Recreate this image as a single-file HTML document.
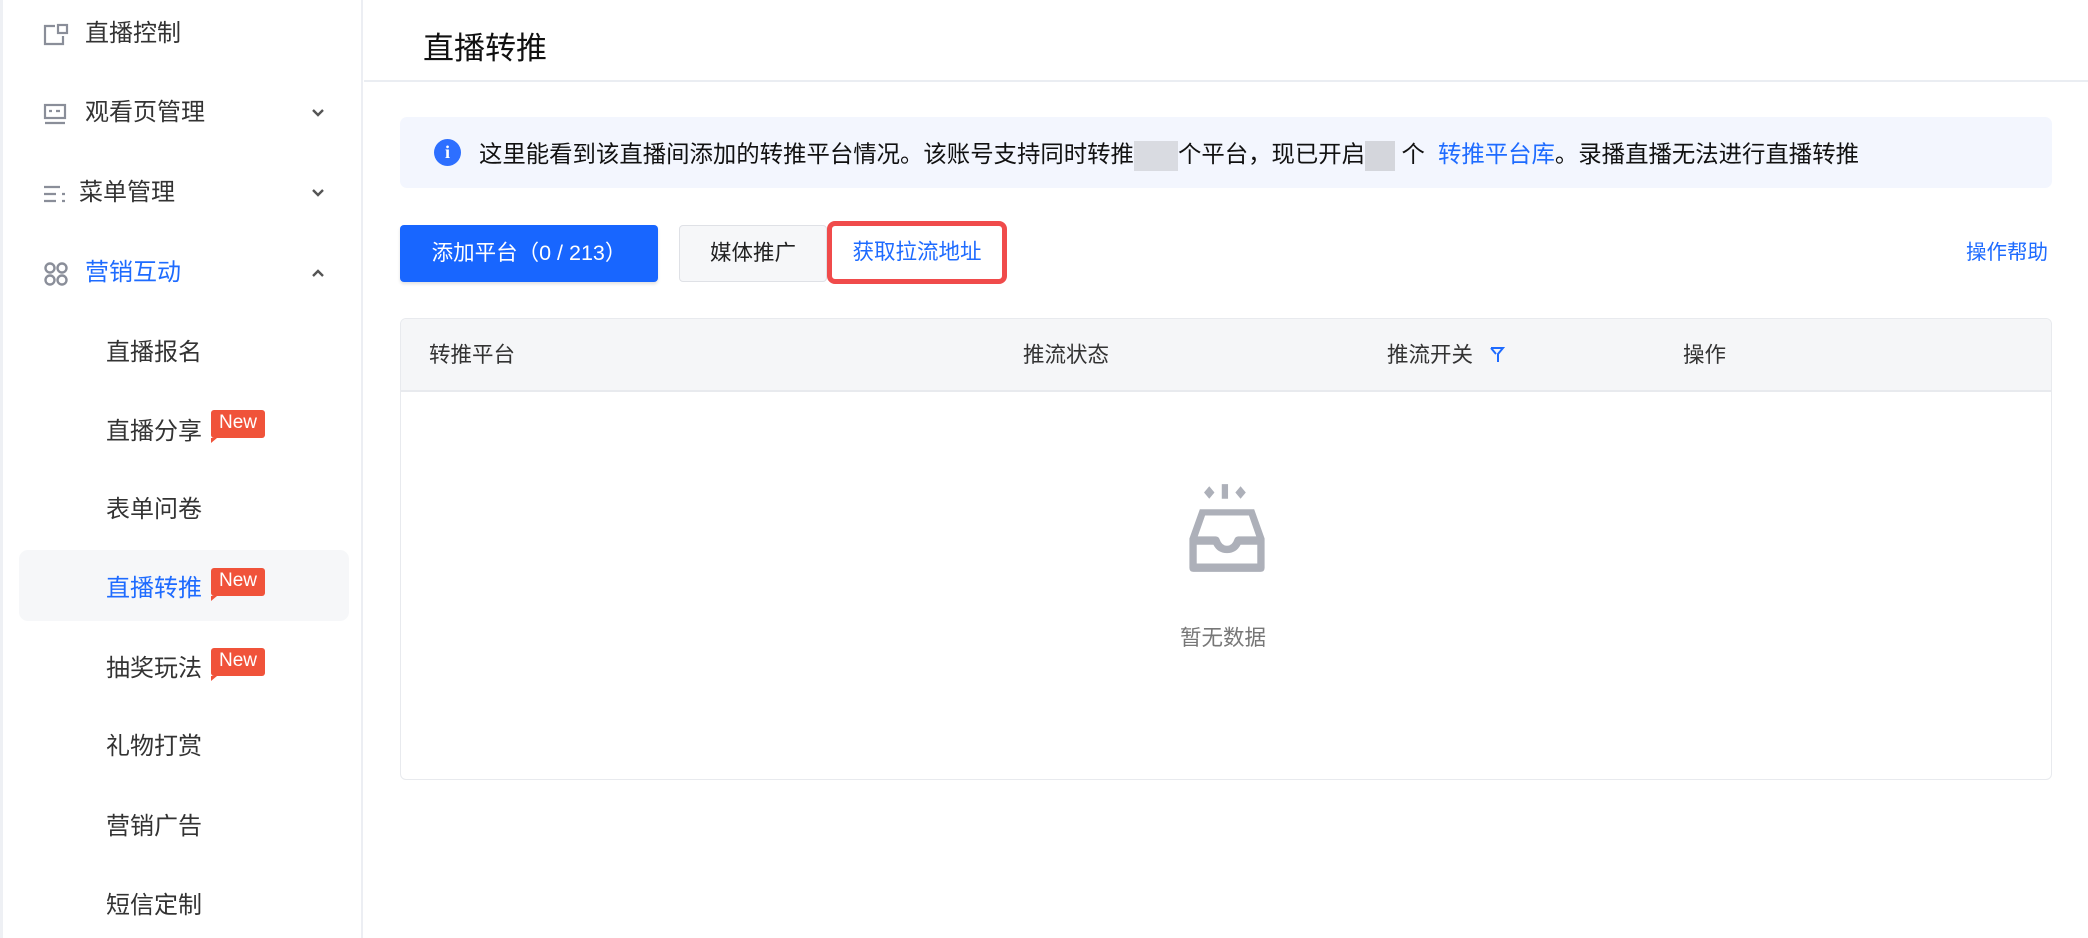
<!DOCTYPE html>
<html><head><meta charset="utf-8"><style>
*{box-sizing:border-box;margin:0;padding:0}
body{width:2088px;height:938px;overflow:hidden;background:#fff;font-family:"Liberation Sans","Noto Sans CJK SC",sans-serif;color:#333;position:relative}
.sb{position:absolute;left:0;top:0;width:363px;height:938px;border-right:2px solid #eceef3;border-left:3px solid #eef0f4}
.mi{position:absolute;left:0;width:360px;height:40px;line-height:40px;font-size:24px;color:#333}
.mi .ic{position:absolute;left:40px;top:8px;width:26px;height:26px}
.mi .tx{position:absolute;left:82px}
.mi .ch{position:absolute;left:305px;top:10px}
.sub{position:absolute;left:103px;font-size:24px;line-height:40px;color:#333}
.badge{position:absolute;left:208px;width:54px;height:28px;background:#f0533a;color:#fff;font-size:19px;line-height:26px;text-align:center;border-radius:3px}
.badge:after{content:"";position:absolute;left:0;bottom:-5px;border-left:6px solid #f0533a;border-bottom:5px solid transparent}
.abs{position:absolute}
</style></head><body>
<div class="sb">
 <div class="mi" style="top:14px"><svg class="ic" viewBox="0 0 26 26" fill="none" stroke="#8a8e99" stroke-width="2.2"><path d="M12 4H2v18h18v-8"/><rect x="15" y="3" width="9" height="8"/></svg><span class="tx">直播控制</span></div>
 <div class="mi" style="top:93px"><svg class="ic" viewBox="0 0 26 26" fill="none" stroke="#8a8e99" stroke-width="2.2"><rect x="2" y="4" width="20" height="13"/><path d="M6 10h3M13 10h4M2 22h20"/></svg><span class="tx">观看页管理</span><svg class="ch" width="20" height="20" viewBox="0 0 20 20" fill="none" stroke="#555" stroke-width="2.4"><path d="M5 7l5 5 5-5"/></svg></div>
 <div class="mi" style="top:173px"><svg class="ic" viewBox="0 0 26 26" fill="none" stroke="#8a8e99" stroke-width="2.2"><path d="M1 6h16M1 13h12M1 20h12M19 13h3M19 20h3"/></svg><span class="tx" style="left:76px">菜单管理</span><svg class="ch" width="20" height="20" viewBox="0 0 20 20" fill="none" stroke="#555" stroke-width="2.4"><path d="M5 7l5 5 5-5"/></svg></div>
 <div class="mi" style="top:253px"><svg class="ic" viewBox="0 0 26 26" fill="none" stroke="#8a8e99" stroke-width="2.4"><circle cx="7" cy="7" r="4.5"/><circle cx="19" cy="7" r="4.5"/><circle cx="7" cy="19" r="4.5"/><circle cx="19" cy="19" r="4.5"/></svg><span class="tx" style="color:#1e6bff">营销互动</span><svg class="ch" width="20" height="20" viewBox="0 0 20 20" fill="none" stroke="#555" stroke-width="2.4"><path d="M5 13l5-5 5 5"/></svg></div>
 <div class="sub" style="top:333px">直播报名</div>
 <div class="sub" style="top:412px">直播分享</div><div class="badge" style="top:410px">New</div>
 <div class="sub" style="top:490px">表单问卷</div>
 <div class="abs" style="left:16px;top:550px;width:330px;height:71px;background:#f6f7f9;border-radius:9px"></div>
 <div class="sub" style="top:569px;color:#1e6bff">直播转推</div><div class="badge" style="top:568px">New</div>
 <div class="sub" style="top:649px">抽奖玩法</div><div class="badge" style="top:648px">New</div>
 <div class="sub" style="top:727px">礼物打赏</div>
 <div class="sub" style="top:807px">营销广告</div>
 <div class="sub" style="top:886px">短信定制</div>
</div>
<div class="abs" style="left:423px;top:29px;font-size:31px;color:#111;line-height:40px">直播转推</div>
<div class="abs" style="left:364px;top:80px;width:1724px;height:2px;background:#eaedf2"></div>
<div class="abs" style="left:400px;top:117px;width:1652px;height:71px;background:#f3f6fe;border-radius:7px"></div>
<div class="abs" style="left:434px;top:139px;width:27px;height:27px;border-radius:50%;background:#2d6fff;color:#fff;font:bold 18px/27px 'Liberation Serif',serif;text-align:center">i</div>
<div class="abs" style="left:479px;top:137px;font-size:23.4px;line-height:34px;color:#111;white-space:nowrap">这里能看到该直播间添加的转推平台情况。该账号支持同时转推<span style="display:inline-block;width:44px;height:30px;background:#d9dbe1;vertical-align:middle"></span>个平台，现已开启<span style="display:inline-block;width:30px;height:30px;background:#d4d6dc;vertical-align:middle"></span> 个 &nbsp;<span style="color:#1e6bff">转推平台库</span>。录播直播无法进行直播转推</div>
<div class="abs" style="left:400px;top:225px;width:258px;height:57px;background:#1866ff;border-radius:4px;color:#fff;font-size:21.5px;line-height:57px;text-align:center;box-shadow:0 2px 3px rgba(0,0,0,.12)">添加平台（0 / 213）</div>
<div class="abs" style="left:679px;top:225px;width:148px;height:57px;background:#f6f7f9;border:1px solid #dfe1e6;border-radius:4px;font-size:21.5px;line-height:55px;text-align:center;color:#222">媒体推广</div>
<div class="abs" style="left:827px;top:221px;width:180px;height:63px;border:5px solid #f04b4b;border-radius:8px;background:#fff;color:#1e6bff;font-size:21.5px;line-height:53px;text-align:center">获取拉流地址</div>
<div class="abs" style="left:1966px;top:238px;font-size:20.5px;line-height:30px;color:#1e6bff">操作帮助</div>
<div class="abs" style="left:400px;top:318px;width:1652px;height:462px;border:1px solid #e8eaee;border-radius:6px;overflow:hidden">
 <div style="height:73px;background:#f5f6f8;border-bottom:2px solid #e8eaee;position:relative;font-size:21.5px;color:#333;line-height:73px">
  <span class="abs" style="left:28px">转推平台</span><span class="abs" style="left:622px">推流状态</span><span class="abs" style="left:986px">推流开关</span>
  <svg class="abs" style="left:1088px;top:27px" width="16" height="18" viewBox="0 0 16 18" fill="none" stroke="#1e6bff" stroke-width="2"><path d="M2 2h12l-5 6v8M7 8L2 2"/></svg>
  <span class="abs" style="left:1282px">操作</span>
 </div>
</div>
<svg class="abs" style="left:1180px;top:484px" width="94" height="88" viewBox="0 0 90 84" fill="#adb0b9"><path d="M40 0h6v14h-6zM23 8l5-6 5 6-5 6zM53 8l5-6 5 6-5 6z"/><path d="M19 24h52l10 28v28q0 4-4 4H13q-4 0-4-4V52zM24 30l-7 20h17q3 0 4 3 2 6 7 6t7-6q1-3 4-3h17l-7-20zM16 58v18h58V58H58q-4 8-13 8t-13-8z" fill-rule="evenodd"/></svg>
<div class="abs" style="left:1180px;top:622px;font-size:21.5px;color:#777;line-height:32px">暂无数据</div>
</body></html>
